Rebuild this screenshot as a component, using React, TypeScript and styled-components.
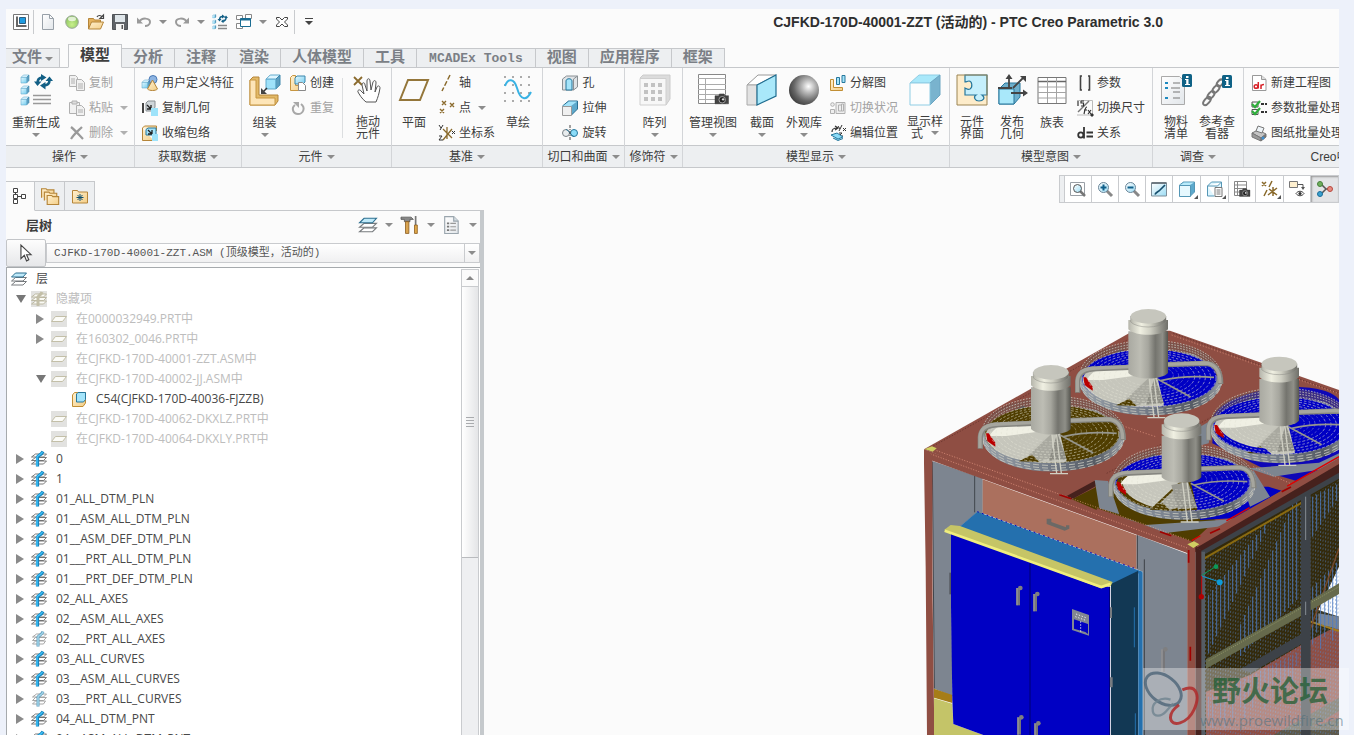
import React from 'react';
import styled, { createGlobalStyle, css } from 'styled-components';

const cjk = '"Noto Sans CJK SC", sans-serif';

const GlobalStyle = createGlobalStyle`
  * { box-sizing: border-box; }
  body {
    margin: 0;
    background: #edf1fa;
    color: #3c3c3c;
    font: 12px/14px "Liberation Sans", ${cjk};
    overflow: hidden;
  }
  button { font: inherit; color: inherit; background: none; border: 0; padding: 0; margin: 0; }
  svg { display: block; flex: none; }
  ul { list-style: none; margin: 0; padding: 0; }
`;

/* ---------- icons ---------- */

const Defs = styled.svg`
  position: absolute;
  width: 0;
  height: 0;
`;

const SharedDefs = () => (
  <Defs aria-hidden="true">
    <defs>
      <radialGradient id="ball" cx=".65" cy=".38" r=".7"><stop offset="0" stopColor="#fff" /><stop offset=".3" stopColor="#bbb" /><stop offset=".7" stopColor="#666" /><stop offset="1" stopColor="#3c3c3c" /></radialGradient>
      <radialGradient id="green" cx=".5" cy=".7" r=".7"><stop offset="0" stopColor="#c8f08c" /><stop offset="1" stopColor="#86bf5a" /></radialGradient>
      <linearGradient id="page" x1="0" y1="0" x2="1" y2="1"><stop offset="0" stopColor="#fff" /><stop offset="1" stopColor="#e2e6ea" /></linearGradient>
      <linearGradient id="tan" x1="0" y1="0" x2="1" y2="1"><stop offset="0" stopColor="#fff0cf" /><stop offset="1" stopColor="#f4cf88" /></linearGradient>
      <linearGradient id="ice" x1="0" y1="0" x2="1" y2="1"><stop offset="0" stopColor="#e4f8ff" /><stop offset="1" stopColor="#74cdef" /></linearGradient>
      <linearGradient id="motor"><stop offset="0" stopColor="#a9a9a1" /><stop offset=".3" stopColor="#bdbdb4" /><stop offset=".5" stopColor="#a6a69e" /><stop offset=".68" stopColor="#74746e" /><stop offset=".86" stopColor="#8f8f88" /><stop offset="1" stopColor="#55554f" /></linearGradient>
      <linearGradient id="collar"><stop offset="0" stopColor="#b5b5ab" /><stop offset=".3" stopColor="#f0f0e2" /><stop offset=".55" stopColor="#d0d0c4" /><stop offset=".8" stopColor="#96968e" /><stop offset="1" stopColor="#70706a" /></linearGradient>
      <linearGradient id="wall"><stop offset="0" stopColor="#98a0a8" /><stop offset=".45" stopColor="#747c88" /><stop offset=".8" stopColor="#555b64" /><stop offset="1" stopColor="#9aa0a6" /></linearGradient>
      <linearGradient id="lens" x1="0" y1="0" x2="1" y2="1"><stop offset="0" stopColor="#fff" /><stop offset="1" stopColor="#9cdcf4" /></linearGradient>
    </defs>
  </Defs>
);

const Cube = ({ x = 0, y = 0, s = 1, front = 'url(#ice)' }: { x?: number; y?: number; s?: number; front?: string }) => (
  <g transform={`translate(${x} ${y}) scale(${s})`} strokeLinejoin="round">
    <path d="M0 3l3-3h7L7 3z" fill="#dff6ff" stroke="#5fa9cc" strokeWidth=".7" />
    <path d="M7 3l3-3v7l-3 3z" fill="#5d9fc0" stroke="#3b86ac" strokeWidth=".7" />
    <path d="M0 3h7v7H0z" fill={front} stroke="#5fa9cc" strokeWidth=".7" />
  </g>
);

const Camera = ({ x, y, s = 1 }: { x: number; y: number; s?: number }) => (
  <g transform={`translate(${x} ${y}) scale(${s})`}>
    <path d="M0 3h4l1-2h5l1 2h4v9H0z" fill="#444" stroke="#333" strokeWidth=".5" />
    <circle cx="8" cy="7.500" r="3.600" fill="#222" stroke="#aaa" /><circle cx="9" cy="7" r="1.300" fill="#ddd" />
  </g>
);

const Info = ({ x, y, s = 1 }: { x: number; y: number; s?: number }) => (
  <g transform={`translate(${x} ${y}) scale(${s})`}>
    <rect width="10" height="13" rx="1.500" fill="#0f6286" />
    <path d="M4 2h2.500v2H4zM3 5h3.500v5H8v1H3v-1h1.200V6H3z" fill="#fff" />
  </g>
);

const DocPair = () => (
  <g fill="#f1f1f1" stroke="#b0b0b0">
    <path d="M.5.5h6l2 2v9h-8z" /><path d="M2 4h4M2 6h4M2 8h4" />
    <path d="M7.500 4.500h5l3 3v8h-8z" /><path d="M9 9h5M9 11h5M9 13h5" />
  </g>
);

const icons: Record<string, React.ReactNode> = {
  app: <g><path d="M.5.5h15v15H.500z" fill="#fff" stroke="#777" /><path d="M3 2.500h2v8.500h8.500v2H3z" fill="#666" /><path d="M6.500 3.500h6v6h-6z" fill="#1e9be0" stroke="#2d5f80" /></g>,
  fresh: <path d="M2.500.5h7l4 4v11h-11zM9.500.5v4h4" fill="url(#page)" stroke="#98a0a8" />,
  globe: <g><circle cx="8" cy="8" r="6.300" fill="url(#green)" stroke="#9aa79a" /><ellipse cx="8" cy="5" rx="4" ry="2.200" fill="#fff" opacity=".7" /></g>,
  open: <g><path d="M.5 15V4.500h5l1 1.500h6V9" fill="#e4b25e" stroke="#b58539" /><path d="M.5 15l3-7h12l-3 7z" fill="url(#tan)" stroke="#b58539" /><path d="M9 3c1-2 4-2 5 0M15.500 1v3.500H12z" fill="none" stroke="#444" strokeWidth="1.200" /></g>,
  save: <g><path d="M.5.5h15v15h-15z" fill="#606468" stroke="#505458" /><path d="M3 1h10v7H3z" fill="#dfe6ea" /><path d="M4 10h8v6H4z" fill="#f6f6f6" /><path d="M9.500 11h1.500v4H9.500z" fill="#555" /></g>,
  undo: <g fill="none" stroke="#9a9a9a" strokeWidth="2"><path d="M3 8c3-5 11-4 11 0 0 3-3 4-5 4" /><path d="M1 3.500v6h6z" fill="#9a9a9a" stroke="none" /></g>,
  redo: <g fill="none" stroke="#9a9a9a" strokeWidth="2"><path d="M13 8c-3-5-11-4-11 0 0 3 3 4 5 4" /><path d="M15 3.500v6H9z" fill="#9a9a9a" stroke="none" /></g>,
  regen: <g><Cube x={.5} y={.5} s={.35} /><Cube x={.5} y={6} s={.35} /><Cube x={.5} y={11.500} s={.35} /><path d="M6 11.500h9M6 14.500h9" stroke="#888" strokeWidth="1.300" /><path d="M7.500 6c0-2 1-3.500 3-3.500M14 3c.5 2-1 4-3 4.300" fill="none" stroke="#125f85" strokeWidth="1.500" /><path d="M10 .5l3 2-3 2zM11.500 5.300v4L9 7.300zM5.500 5h4l-2 2.500zM16 4h-4l2-2.500z" fill="#125f85" /></g>,
  windows: <g fill="#fff" stroke="#888"><path d="M.5 1.500h6v4h-6zM9.500.5h6v4h-6zM.5 9.500h6v5h-6z" /><path d="M4.500 4.500h10v8h-10z" stroke="#1a6c92" /><path d="M4.500 5.500h10" stroke="#1a6c92" strokeWidth="2" /></g>,
  closeX: <path d="M2.500 3.500h3L8 6l2.500-2.500h3V5L10.500 8l3 3v1.500h-3L8 10l-2.500 2.500h-3V11l3-3-3-3z" fill="#fff" stroke="#444" />,
  copy: <DocPair />,
  paste: <g fill="#f1f1f1" stroke="#b0b0b0"><path d="M.5 2.500h10v11H.500z" /><path d="M3 1h5v3H3z" fill="#ddd" /><path d="M7.500 5.500h5l3 3v7h-8z" /><path d="M9 10h5M9 12h5" /></g>,
  del: <path d="M2 2c4 3 8 8 12 12M13 2C9 6 5 9 2 14" fill="none" stroke="#9a9a9a" strokeWidth="2.200" />,
  udf: <g><Cube x={0} y={5} s={.8} /><circle cx="11" cy="4.500" r="4" fill="#8db4e2" stroke="#4a79b5" /><path d="M10.500 5l5 9c-2 2-8 2-10 0z" fill="url(#tan)" stroke="#b58539" /></g>,
  copyGeom: <g><path d="M1 3v10" stroke="#444" strokeWidth="2" /><path d="M4 3l2-2h7v6l-2 4H4z" fill="#cfd6da" stroke="#8a9094" /><path d="M5 5l4 4M9 5v4H5" fill="none" stroke="#222" strokeWidth="1.300" /><path d="M9 8h7v8H9z" fill="#9ee3fa" /></g>,
  shrink: <g><path d="M.5 3l2-2h12v5M.5 3v12.500h11" fill="url(#tan)" stroke="#b58539" /><path d="M4 4.500L6 3h8v7H4z" fill="#a4e4fa" stroke="#27779c" /><path d="M6 5l4 4M10 5v4H6" fill="none" stroke="#222" strokeWidth="1.300" /><path d="M10 9h6v7h-6z" fill="#9ee3fa" /></g>,
  create: <g><path d="M.5 2.500l2-2h3v10h7v3l-2 2H.5z" fill="url(#tan)" stroke="#c79641" /><path d="M5 3l2-2h8v6l-2 2H5z" fill="url(#ice)" stroke="#3b86ac" /><path d="M8.500 7.500h4l3 3v5h-7z" fill="#fff" stroke="#888" /></g>,
  repeat: <g fill="none" stroke="#a8a8a8" strokeWidth="2"><path d="M5 5c-4 3-2 9 3 9 5 0 8-6 3-10" /><path d="M3 2h6v6z" fill="#a8a8a8" stroke="none" /></g>,
  axis: <path d="M11 0L3 16" stroke="#8a6a2c" strokeWidth="1.500" strokeDasharray="5 2" />,
  point: <path d="M2 2l4 4M6 2L2 6M10 4l4 4M14 4l-4 4M0 10l4 4M4 10l-4 4" transform="translate(1 -1)" stroke="#8a6a2c" strokeWidth="1.400" />,
  csys: <g fill="none"><path d="M8 2v12M4 4l9 9M13 4l-9 11" stroke="#8a6a2c" strokeWidth="1.300" /><path d="M0 0l2 3M4 0L1 5M0 11h3l-3 4h4M13 6l3 3M16 6l-3 3" stroke="#333" /></g>,
  hole: <g><path d="M.5 4l4-3h11v11l-4 3H.5z" fill="#dfe3e6" stroke="#8a9094" /><path d="M4 15V6c0-3 6-3 6 0v9z" fill="#a4e4fa" stroke="#27779c" /><path d="M11.500 4v11M11.500 4l4-3" stroke="#8a9094" /></g>,
  extrude: <g><path d="M.5 6l6-5h9v8l-6 6z" fill="#5da9cc" stroke="#2b6f91" /><path d="M1 6l6-4.500h8L9 6z" fill="#a4e4fa" /><path d="M.5 6.500h9v9h-9z" fill="#f0f0f0" stroke="#999" /></g>,
  revolve: <g><ellipse cx="4" cy="8" rx="3.500" ry="3.500" fill="#e8ecee" stroke="#7a8186" /><ellipse cx="12" cy="8" rx="3.500" ry="3.500" fill="#8bdcf8" stroke="#27779c" /><path d="M4 4.500c2 0 6 7 8 7" fill="none" stroke="#27779c" /><path d="M8 0v16" stroke="#444" strokeDasharray="3 1 1 1" /></g>,
  explode: <g><path d="M.5 4.500h3v8h9v3h-12z" fill="url(#tan)" stroke="#c18e34" /><path d="M6.500 2.500h3v7h-3zM12 .5h3v7h-3z" fill="#a4e4fa" stroke="#27779c" /></g>,
  toggleState: <g fill="#eee" stroke="#b0b0b0"><circle cx="2.500" cy="4.500" r="1.800" /><path d="M.5 9.500h4v4h-4zM6 2.500h9v11H6z" /><path d="M8.500 5v6h3V5zM11.500 4h2v7h-2z" /></g>,
  editPos: <g fill="none"><path d="M2 7c0-4 3-4 5-4M5 1l3 2-3 2" stroke="#333" strokeWidth="1.200" /><path d="M8 1l2 3M12 0L9 6M13 3l3 3M16 3l-3 3M9 8h3l-3 3h4" stroke="#333" /><path d="M1 10l6-2 6 4-5 2zM3 13l5 2.500 5-2" fill="#8bdcf8" stroke="#27779c" /></g>,
  params: <path d="M5 1H3.500v14H5M11 1h1.500v14H11" fill="none" stroke="#444" strokeWidth="1.600" />,
  dims: <g fill="none" stroke="#333"><path d="M0 .5h15.500V15H0" stroke="#bbb" /><path d="M1 12L12 1" stroke="#777" strokeWidth="1.500" /><path d="M1 1v5M4 1h3M4 1v2h2.500v3H4M10 7c-2 0-2 3-3 7M7 10h3M11 10l3 4M14 10l-3 4" strokeWidth="1.200" /><path d="M14 14h2v2h-2z" fill="#333" /></g>,
  relation: <g fill="none" stroke="#333" strokeWidth="1.800"><circle cx="3.800" cy="10" r="2.600" /><path d="M7 2v11.500M9.500 7.500H16M9.500 11.500H16" /></g>,
  drawing: <g><path d="M1.500.5h9l4.500 4v11H1.500z" fill="#fff" stroke="#999" /><path d="M10.500.5v4H15" fill="#ddd" stroke="#999" /><g fill="none" stroke="#d8232a" strokeWidth="1.500"><circle cx="5" cy="11.500" r="1.800" /><path d="M7.300 7v6.500M10 9.500v4.500M10 11.500c0-1.500 1-2 3-2" /></g></g>,
  batch: <g fill="none"><path d="M1 2h6v5H1zM1 9.500h6v5H1z" stroke="#555" /><path d="M1 4l3 3 5-6M1 11l3 3 5-6" stroke="#2fae3b" strokeWidth="2.200" /><path d="M10 4h6M10 12h6" stroke="#333" strokeWidth="2" strokeDasharray="3 1" /></g>,
  print: <g stroke="#777"><path d="M1 8l6-3 8 4-5 4z" fill="#c4c4c4" /><path d="M1 8l9 5v3l-9-4z" fill="#999" /><path d="M10 13l5-4v3l-5 4z" fill="#777" /><path d="M5 6l2-5 6 2-2 5z" fill="#eef4f8" /><circle cx="12" cy="13" r="1.500" fill="#3f8fd0" stroke="none" /></g>,
  zoomFit: <g><path d="M.5 1.500h14v13H.500z" fill="#fff" stroke="#9aa0a6" /><path d="M9 9l6 6" stroke="#777" strokeWidth="2.500" /><circle cx="7.500" cy="7.500" r="4" fill="url(#lens)" stroke="#555" /></g>,
  zoomIn: <g><path d="M9 9l6 6" stroke="#888" strokeWidth="3" /><circle cx="6.500" cy="6.500" r="5" fill="url(#lens)" stroke="#6a8598" /><path d="M3.500 6.500h6M6.500 3.500v6" stroke="#0f5f8a" strokeWidth="2" /></g>,
  zoomOut: <g><path d="M9 9l6 6" stroke="#888" strokeWidth="3" /><circle cx="6.500" cy="6.500" r="5" fill="url(#lens)" stroke="#6a8598" /><path d="M3.500 6.500h6" stroke="#0f5f8a" strokeWidth="2" /></g>,
  repaint: <g><path d="M.5 2h15v13H.500z" fill="url(#lens)" stroke="#7d8e99" /><path d="M.5 2h15" stroke="#6f7a82" strokeWidth="2" /><path d="M4 13.500c1-2.500 3-2.500 5-4.500l5-5" fill="none" stroke="#174f6e" strokeWidth="1.700" /></g>,
  style: <g><path d="M.5 4l4-3h11v10l-4 4H.5z" fill="#5da9cc" stroke="#5597b6" /><path d="M1 4l4-2.500h10L11 4z" fill="#b9ebfb" /><path d="M.5 4.500h11v11H.500z" fill="#e6f8fe" stroke="#5597b6" /></g>,
  saved: <g><path d="M.5 5l4-4h10v5M.5 5v10h7M.5 5h10l4-4" fill="#dff6ff" stroke="#5597b6" /><path d="M8 6.500h7v9H8zM9.500 9h4M9.500 11h4M9.500 13h4" fill="#fff" stroke="#777" /></g>,
  viewMgr: <g><path d="M.5.5h12v14H.500zM.5 4h12M.5 7.500h12M.5 11h12M3.500 0v15" fill="#fff" stroke="#888" /><Camera x={5.500} y={7} s={.7} /></g>,
  datums: <g fill="none" stroke="#8a6a2c" strokeWidth="1.500"><path d="M0 1l4 4M4 1L0 5M10 0L7 6M5 9l-3 6M11 6v9M7 8l8 6M15 7l-9 7" /></g>,
  annot: <g><path d="M.5.5h8v6h-8z" fill="#fff0cf" stroke="#777" /><path d="M9 3.500h5v3" fill="none" stroke="#555" /><path d="M12 6l2 3 2-3z" fill="#555" /><path d="M7 12.500c2-3 6-3 8 0-2 3-6 3-8 0z" fill="#fff" stroke="#444" /><circle cx="11" cy="12.500" r="1.600" fill="#333" /></g>,
  spin: <g><path d="M4 3l5 5-5 5M9 8h4" fill="none" stroke="#555" strokeWidth="1.500" /><circle cx="3" cy="3" r="2.500" fill="#6fae5c" stroke="#45803a" /><circle cx="3" cy="13" r="2.500" fill="#3aa0d0" stroke="#1b6e98" /><circle cx="13" cy="8" r="2.500" fill="#e58a80" stroke="#b8473c" /></g>,
  treeTab: <g fill="#fff" stroke="#444"><path d="M3.500 5v2M3.500 10v2M5.500 8.500h4" /><path d="M1.500.5h4v4h-4zM1.500 6.500h4v4h-4zM1.500 11.500h4v4h-4zM9.500 6.500h4v4h-4z" /></g>,
  folders: <g fill="url(#tan)" stroke="#b58539"><path d="M.5 9.500v-8h4l1 1h6v3" /><path d="M3 12V4.500h4l1 1h6V8" /><path d="M5.500 15.500v-8h4l1 1h5.200v7z" /></g>,
  favorites: <g><path d="M.5 15V2.500h5l1 1.500h9v11z" fill="url(#tan)" stroke="#b58539" /><path d="M8 6v7M4.500 9.500h7M5.500 7l5 5M10.500 7l-5 5" stroke="#0f5070" /></g>,
  layers: <g fill="#fff" stroke="#777b7e"><path d="M.5 14l4-3.500h11L12 14z" /><path d="M.5 10l4-3.500h11L12 10z" /><path d="M.5 6l4-4h11L12 6z" fill="#bfeafa" stroke="#2d6f90" /></g>,
  tools: <g><path d="M0 1h9l2 2H8v2H3V3H0z" fill="#888" stroke="#555" strokeWidth=".7" /><path d="M4 5h3v10.500H4z" fill="#d9a450" stroke="#8a5a1c" strokeWidth=".7" /><path d="M13 0v8" stroke="#777" strokeWidth="1.500" /><path d="M12 8h2.500v7.500H12z" fill="#e0a94a" stroke="#8a5a1c" strokeWidth=".7" /></g>,
  settings: <g><path d="M1.500.5h8l4 4v11h-12z" fill="url(#page)" stroke="#9aa5ad" /><path d="M9.500.5v4h4" fill="#d5dde2" stroke="#9aa5ad" /><path d="M6.500 6.500h5M6.500 9.500h5M6.500 12.500h5" stroke="#999" /><path d="M3.500 6.500h2M3.500 9.500h2M3.500 12.500h2" stroke="#777" strokeWidth="1.500" /></g>,
  pointer: <path d="M3.500 1v12l3-3 2 5 2-1-2-4.500h4z" fill="#fff" stroke="#444" />,
  layer: <g><path d="M.5 13l4-3h11l-3 3zM.5 9.500l4-3h11l-3 3zM.5 6l4-3h11l-3 3z" fill="#fff" stroke="#6a6a6a" strokeWidth=".9" /><path d="M6.500 15.500V6c1-2 4-2 5.500-5.500" fill="none" stroke="#1585bd" strokeWidth="3.200" /><path d="M6 15V6c1-2 4-2 5.500-5" fill="none" stroke="#3fc0f8" strokeWidth="1.500" /></g>,
  layerDim: <g opacity=".65"><path d="M1.500 13l3-3h10l-2 3zM1.500 9.500l3-3h11l-3 3zM1.500 6l4-3h10l-3 3z" fill="#fff" stroke="#6a6a6a" strokeWidth=".9" /><path d="M7 15.500V6c1-2 4-2 5-5.500" fill="none" stroke="#146d9c" strokeWidth="3" /><path d="M7 15V6c1-2 4-2 5-5" fill="none" stroke="#6fc0df" strokeWidth="1.500" /></g>,
  hiddenLayer: <g><path d="M0 0h16v16H0z" fill="#e2e2e0" /><path d="M.5 13l4-3h11l-3 3zM.5 9.500l4-3h11l-3 3zM.5 6l4-3h11l-3 3z" fill="#fafaf5" stroke="#bdb9a3" /><path d="M7 15V6c1-2 3-2 4-5" fill="none" stroke="#c3bfa8" strokeWidth="3" /></g>,
  hiddenPlane: <g><path d="M0 0h16v16H0z" fill="#e2e2e0" /><path d="M.5 10.500l4-5h11l-4 5z" fill="#fcfcf8" stroke="#c3bfa8" /></g>,
  part: <g><path d="M1.500 4l2-2.500h11V12l-2.500 3.500H1.500z" fill="url(#tan)" stroke="#c18e34" /><path d="M5.500 3l1.500-1.500h7.500v7L12.500 11h-7z" fill="#a4e4fa" stroke="#27779c" /></g>,
  /* 32px ribbon artwork */
  bigRegen: <g><Cube x={1} y={1} s={.8} /><Cube x={1} y={12} s={.8} /><Cube x={1} y={23} s={.8} /><path d="M13 21.500h18M13 25.500h18M13 29.500h18" stroke="#999" strokeWidth="1.600" /><path d="M17.500 9c0-3 1-5 4.500-5.500M29.500 6c0 3-1 5-5 5.500" fill="none" stroke="#125f85" strokeWidth="2.600" /><path d="M21 0l5.500 3.500L21 7zM25.500 8v7.500L20 11.500zM14 7.500h7.500L17.500 12zM33 7h-7.500L29.500 2.500z" fill="#125f85" /></g>,
  bigAssemble: <g><path d="M1 6l3-3h6v18h19v6l-3 4H1z" fill="#e2b968" stroke="#b58539" /><path d="M1 6h6v18h19v7H1z" fill="#fde5b8" stroke="#c79641" /><Cube x={17} y={1} s={1.400} front="#9fe2fa" /><path d="M18 14l-4 4" stroke="#333" strokeWidth="1.500" /><path d="M12 14v6h6z" fill="#444" /></g>,
  bigDrag: <g><path d="M2 3l8 8M10 3l-8 8" stroke="#8a6a2c" strokeWidth="1.800" /><path d="M14 29c-4-3-7-8-8-10-1-2 2-3 3-1l3 3-2-9c0-3 3-3 3 0l2 6V8c0-3 3-3 3 0l1 9 2-8c1-2 3-2 3 1l-1 9 2-5c1-2 3-1 3 1-1 6-2 9-4 14z" transform="translate(0 -1)" fill="#fff" stroke="#555" /></g>,
  bigPlane: <path d="M2 26L10 6h20l-8 20z" fill="none" stroke="#94763a" strokeWidth="2" />,
  bigSketch: <g><g fill="#444">{[3, 11, 19, 27].flatMap(y => [3, 11, 19, 27].map(x => <circle key={`${x}-${y}`} cx={x} cy={y} r=".8" />))}</g><path d="M3 12c3-8 9-8 12 2 4 14 10 12 14 4" fill="none" stroke="#38b2e4" strokeWidth="2" /></g>,
  bigPattern: <g><path d="M1 4l3-3h27v24l-4 6z" fill="#dcdcdc" stroke="#ccc" /><path d="M1 4.500h26V31H1z" fill="#f7f7f7" stroke="#cfcfcf" /><g fill="#c2c2c2">{[9, 16, 23].flatMap(y => [5, 12, 19].map(x => <rect key={`${x}-${y}`} x={x} y={y} width="4" height="4" />))}</g></g>,
  bigView: <g><path d="M1.500.5h27v29h-27z" fill="#fff" stroke="#888" /><path d="M1 4.500h28M1 10.500h28M1 15.500h28M1 20.500h28M1 25.500h28M8.500 5v24" stroke="#ababab" /><Camera x={18} y={19} s={.9} /></g>,
  bigSection: <g><path d="M1 11L12 1h18L11 11z" fill="#fff" stroke="#999" /><path d="M1 11h10v20H1z" fill="#e2e2e2" stroke="#aaa" /><path d="M11 11L30 1v21L11 31z" fill="#a9e8fa" stroke="#1f6d90" strokeWidth="1.200" /></g>,
  bigBall: <circle cx="16" cy="16" r="15" fill="url(#ball)" />,
  bigStyle: <g><path d="M1 9l9-8h21L21 9z" fill="#a9e8fa" stroke="#8fcde4" /><path d="M21 9L31 1v20L21 31z" fill="#79b3ce" stroke="#6aa5c2" /><path d="M1 9h20v22H1z" fill="#fdfdfd" stroke="#8fcde4" /></g>,
  bigInterface: <g><path d="M1 1h30v30H1z" fill="#fdecca" /><path d="M9 1h22v20h-5c4 3 1 6-3 6s-6-4-3-6H9v-7c2 1 3 2 5 1 3-2 2-8-1-8-2 0-2 1-4 1z" fill="#c5effc" stroke="#27779c" strokeWidth="1.200" /><path d="M1 1h30v30H1z" fill="none" stroke="#9b8452" /></g>,
  bigPublish: <g><path d="M3 15l6-6h15v14l-6 7H3z" fill="#6dafcc" stroke="#27779c" /><path d="M3 15h15v15H3z" fill="#a9e8fa" stroke="#27779c" /><path d="M13 15V5M17 14L27 4M15 19h13M2 14h14" stroke="#444" strokeWidth="1.800" fill="none" /><path d="M13 0l3.500 5h-7zM30 2v6l-6-6zM32 19l-5 3.500v-7z" fill="#444" /></g>,
  bigTable: <g><path d="M2 3.500h28v26H2z" fill="#fff" stroke="#777" /><path d="M2 7.500h28" stroke="#666" strokeWidth="1.500" /><path d="M2 13h28M2 18.500h28M2 24h28M11.500 4v25M20.500 4v25" stroke="#a4a4a4" /></g>,
  bigBom: <g><path d="M1.500 2.500h18l5 5v23h-23z" fill="url(#page)" stroke="#aaa" /><path d="M13 9h7M11 14h9M13 18h7M13 24h7" stroke="#777" /><path d="M5 9h3M5 14h3M5 24h3" stroke="#1e8ac0" strokeWidth="2" /><Info x={22} y={0} /></g>,
  bigRef: <g fill="none" stroke="#777" strokeWidth="2"><ellipse cx="6" cy="27" rx="5" ry="2.500" transform="rotate(-50 6 27)" /><ellipse cx="10" cy="21" rx="4.500" ry="2.500" transform="rotate(-50 10 21)" /><ellipse cx="15" cy="15" rx="4.500" ry="2.500" transform="rotate(-50 15 15)" /><ellipse cx="19" cy="9" rx="4" ry="2.500" transform="rotate(-50 19 9)" /><g stroke="none"><Info x={21} y={1} /></g></g>,
};

const Icon = ({ name, size = 16, box = 16 }: { name: string; size?: number; box?: number }) => (
  <svg width={size} height={size} viewBox={`0 0 ${box} ${box}`} overflow="visible" aria-hidden="true">{icons[name]}</svg>
);

const Caret = styled.span`
  flex: none;
  width: 0;
  height: 0;
  border: 4px solid transparent;
  border-top-color: #8c8c8c;
  border-bottom: 0;
`;

/* ---------- frame ---------- */

const Page = styled.div`
  position: relative;
  height: 100vh;
  padding: 9px 15px 0 6px;
`;

const Window = styled.main`
  display: flex;
  flex-direction: column;
  height: 100%;
  overflow: hidden;
  background: #fbfbfb;
`;

const TitleBar = styled.header`
  display: flex;
  align-items: center;
  height: 35px;
  padding: 0 0 9px 3px;
`;

const QuickButton = styled.button<{ $w?: number }>`
  display: flex;
  align-items: center;
  justify-content: center;
  flex: none;
  width: ${p => p.$w ?? 24}px;
  height: 24px;
`;

const Rule = styled.span`
  flex: none;
  width: 1px;
  height: 24px;
  margin-right: 2px;
  background: #c9cbce;
`;

const Title = styled.h1`
  margin: 0 176px 0 auto;
  font: bold 14px/18px "Liberation Sans", ${cjk};
  color: #2e2e2e;
  white-space: nowrap;
`;

const Tabs = styled.nav`
  display: flex;
  align-items: flex-end;
  height: 24px;
  box-shadow: inset 0 -1px #c6c8cb;
`;

const Tab = styled.button<{ $active?: boolean; $mono?: boolean }>`
  display: flex;
  align-items: center;
  justify-content: center;
  flex: none;
  height: 20px;
  padding: 2px ${p => (p.$mono ? 12 : 11)}px 0;
  border: 1px solid #c6c8cb;
  border-left: 0;
  background: #edeff1;
  color: #7b7f86;
  font: bold ${p => (p.$mono ? 13 : 15)}px/16px "Liberation Mono", ${cjk};
  ${p => p.$active && css`
    height: 24px;
    border-left: 1px solid #c6c8cb;
    border-bottom-color: #fbfbfb;
    background: #fbfbfb;
    color: #3f3f3f;
  `}
`;

const FileTab = styled(Tab)`
  gap: 3px;
  width: 54px;
  margin-right: 8px;
  padding: 2px 0 0;
`;

const Ribbon = styled.section`
  display: flex;
  overflow: hidden;
  flex: none;
  border-bottom: 1px solid #c6c8cb;
`;

const Group = styled.div<{ $w: number }>`
  display: flex;
  flex-direction: column;
  flex: none;
  width: ${p => p.$w}px;
  border-right: 1px solid #d3d5d8;
`;

const GroupBody = styled.div<{ $center?: boolean }>`
  display: flex;
  justify-content: ${p => (p.$center ? 'center' : 'flex-start')};
  height: 77px;
  padding: 3px 0 0 2px;
`;

const GroupLabel = styled.button`
  display: flex;
  align-items: center;
  justify-content: center;
  gap: 4px;
  height: 22px;
  border-top: 1px solid #c6c8cb;
  background: #edeff1;
`;

const SmallColumn = styled.div`
  display: grid;
  grid-auto-rows: 24px;
  row-gap: 1px;
  margin: 0 2px;
`;

const SmallButton = styled.button`
  display: flex;
  align-items: center;
  gap: 4px;
  padding: 0 3px;
  white-space: nowrap;
  ${Caret} { margin-left: 3px; }
  &:disabled { color: #a3a3a3; }
  &:disabled ${Caret} { border-top-color: #b0b0b0; }
`;

const BigButton = styled.button<{ $w: number }>`
  display: flex;
  flex-direction: column;
  align-items: center;
  width: ${p => p.$w}px;
  padding-top: 3px;
  line-height: 12px;
`;

const BigText = styled.span<{ $two?: boolean }>`
  margin: ${p => (p.$two ? '10px 0 0' : '11px 0 4px')};
  white-space: pre;
  ${Caret} { display: inline-block; margin: 0 0 3px 8px; }
`;

const Divider = styled.span`
  width: 1px;
  height: 60px;
  margin: 7px 3px 0;
  background: #dcdee0;
`;

type Small = { icon: string; text: string; caret?: boolean; off?: boolean };
const Smalls = ({ items }: { items: Small[] }) => (
  <SmallColumn>
    {items.map(i => (
      <SmallButton key={i.text} disabled={i.off}><Icon name={i.icon} />{i.text}{i.caret && <Caret />}</SmallButton>
    ))}
  </SmallColumn>
);

const Big = ({ icon, text, w, caret, endCaret }: { icon: string; text: string; w: number; caret?: boolean; endCaret?: boolean }) => (
  <BigButton $w={w}>
    <Icon name={icon} size={32} box={32} />
    <BigText $two={text.includes('\n')}>{text}{endCaret && <Caret />}</BigText>
    {caret && <Caret />}
  </BigButton>
);

const RibbonGroup = ({ label, w, center, children }: { label: string; w: number; center?: boolean; children: React.ReactNode }) => (
  <Group $w={w}>
    <GroupBody $center={center}>{children}</GroupBody>
    <GroupLabel>{label}<Caret /></GroupLabel>
  </Group>
);

/* ---------- side panel ---------- */

const Work = styled.div`
  display: flex;
  flex: 1;
  min-height: 0;
`;

const Side = styled.aside`
  display: flex;
  flex-direction: column;
  flex: none;
  width: 478px;
  padding-top: 13px;
`;

const SideTabs = styled.div`
  display: flex;
  height: 30px;
  box-shadow: inset 0 -1px #c6c8cb;
`;

const SideTab = styled.button<{ $active?: boolean }>`
  display: flex;
  align-items: center;
  justify-content: center;
  width: ${p => (p.$active ? 29 : 30)}px;
  border: 1px solid #c6c8cb;
  border-left: 0;
  background: ${p => (p.$active ? '#fbfbfb' : '#edeff1')};
  ${p => p.$active && 'border-bottom-color: #fbfbfb;'}
`;

const SideBody = styled.div`
  display: flex;
  flex-direction: column;
  flex: 1;
  min-height: 0;
  border-right: 4px solid #c5c9cc;
`;

const SideHead = styled.div`
  display: flex;
  align-items: center;
  height: 28px;
  h2 { margin: 0 auto 0 20px; font: bold 13px/16px ${cjk}; }
`;

const ModelRow = styled.div`
  display: flex;
  align-items: center;
  height: 28px;
`;

const PickButton = styled.button`
  display: flex;
  align-items: center;
  justify-content: center;
  width: 40px;
  height: 28px;
  border: 1px solid #c3c5c8;
  border-radius: 2px;
  background: linear-gradient(#fdfdfd, #e6e7e9);
`;

const SelectBox = styled.label`
  display: flex;
  align-items: center;
  flex: 1;
  height: 20px;
  border: 1px solid #c9cbce;
  background: linear-gradient(#fff, #f0f0f1);
  select {
    flex: 1;
    height: 18px;
    padding: 0 0 0 7px;
    border: 0;
    border-right: 1px solid #c9cbce;
    appearance: none;
    background: none;
    color: #555;
    font: 11px/16px "Liberation Mono", ${cjk};
  }
  ${Caret} { margin: 0 3px; }
`;

const TreeBox = styled.div`
  display: flex;
  flex: 1;
  min-height: 0;
  overflow: hidden;
  border: 1px solid #a6aaad;
  border-width: 1px 0 0 1px;
  background: #fff;
`;

const Tree = styled.ul`
  flex: 1;
  padding-top: 1px;
`;

const TreeRow = styled.li<{ $depth: number; $muted?: boolean }>`
  display: flex;
  align-items: center;
  height: 20px;
  padding-left: ${p => p.$depth}px;
  color: ${p => (p.$muted ? '#bdbdbd' : '#484848')};
  font: 12px/18px "Open Sans", ${cjk};
  white-space: pre;
`;

const Expander = styled.button<{ $state: 'open' | 'closed' | 'none' }>`
  flex: none;
  width: 20px;
  height: 12px;
  padding-left: 5px;
  &::before {
    content: '';
    display: block;
    width: 0;
    ${p => p.$state === 'open' && 'border: 5px solid transparent; border-top: 8px solid #777; border-bottom: 0;'}
    ${p => p.$state === 'closed' && 'border: 5px solid transparent; border-left: 8px solid #8a8a8a; border-right: 0;'}
  }
`;

const TreeText = styled.span`
  margin-left: 9px;
`;

const ScrollBar = styled.div`
  display: flex;
  flex-direction: column;
  width: 18px;
  margin: 1px 1px 0 0;
  border: 1px solid #c9cbce;
  border-bottom: 0;
  background: #eeeff1;
`;

const ScrollUp = styled.button`
  display: flex;
  align-items: center;
  justify-content: center;
  height: 17px;
  border-bottom: 1px solid #c9cbce;
  background: #fbfbfb;
  &::before { content: ''; border: 4px solid transparent; border-bottom-color: #888; border-top: 0; }
`;

const Thumb = styled.div`
  display: flex;
  flex-direction: column;
  align-items: center;
  justify-content: center;
  gap: 2px;
  height: 271px;
  border-bottom: 1px solid #b9bbbe;
  background: linear-gradient(90deg, #fff, #e4e5e7);
  span { width: 8px; height: 1px; background: #a9abae; }
`;

type Row = { d: number; e: 'open' | 'closed' | 'none'; icon: string; text: string; muted?: boolean };
const layer = (text: string, icon = 'layer'): Row => ({ d: 4, e: 'closed', icon, text });
const rows: Row[] = [
  { d: 4, e: 'open', icon: 'hiddenLayer', text: '隐藏项', muted: true },
  { d: 24, e: 'closed', icon: 'hiddenPlane', text: '在0000032949.PRT中', muted: true },
  { d: 24, e: 'closed', icon: 'hiddenPlane', text: '在160302_0046.PRT中', muted: true },
  { d: 24, e: 'none', icon: 'hiddenPlane', text: '在CJFKD-170D-40001-ZZT.ASM中', muted: true },
  { d: 24, e: 'open', icon: 'hiddenPlane', text: '在CJFKD-170D-40002-JJ.ASM中', muted: true },
  { d: 44, e: 'none', icon: 'part', text: 'C54(CJFKD-170D-40036-FJZZB)' },
  { d: 24, e: 'none', icon: 'hiddenPlane', text: '在CJFKD-170D-40062-DKXLZ.PRT中', muted: true },
  { d: 24, e: 'none', icon: 'hiddenPlane', text: '在CJFKD-170D-40064-DKXLY.PRT中', muted: true },
  layer('0'), layer('1'), layer('01_ALL_DTM_PLN'), layer('01__ASM_ALL_DTM_PLN'), layer('01__ASM_DEF_DTM_PLN'),
  layer('01___PRT_ALL_DTM_PLN'), layer('01___PRT_DEF_DTM_PLN'), layer('02_ALL_AXES'), layer('02__ASM_ALL_AXES'),
  layer('02___PRT_ALL_AXES', 'layerDim'), layer('03_ALL_CURVES'), layer('03__ASM_ALL_CURVES'),
  layer('03___PRT_ALL_CURVES', 'layerDim'), layer('04_ALL_DTM_PNT'), layer('04__ASM_ALL_DTM_PNT'),
];

/* ---------- graphics area ---------- */

const Stage = styled.section`
  display: flex;
  flex-direction: column;
  align-items: flex-end;
  flex: 1;
  min-width: 0;
  padding-top: 7px;
  overflow: hidden;
`;

const ViewTools = styled.div`
  display: flex;
  flex: none;
  height: 28px;
  margin-bottom: 97px;
  border: 1px solid #c9cbce;
  background: #fff;
  &::before { content: ''; width: 4px; background: #edeff1; border-right: 1px solid #c9cbce; }
`;

const ViewButton = styled.button<{ $on?: boolean; $menu?: boolean }>`
  display: flex;
  align-items: center;
  justify-content: center;
  position: relative;
  width: 27px;
  border-right: 1px solid #c9cbce;
  &:last-child { border-right: 0; }
  ${p => p.$on && 'background: #e3e4e6; box-shadow: inset 1px 1px 2px #999;'}
  ${p => p.$menu && css`
    width: 28px;
    &::after { content: ''; position: absolute; right: 2px; bottom: 3px; border: 2px solid #555; border-top-color: transparent; border-left-color: transparent; }
  `}
`;

const rings = [200, 184, 168, 152, 136, 120, 104, 88, 72];

const Fan = ({ x, y, floor, left = '#c4c4ba', children }: { x: number; y: number; floor: string; left?: string; children?: React.ReactNode }) => (
  <g transform={`translate(${x} ${y})`}>
    {/* rear half of the cage */}
    <path d="M186 400C190 260 600 250 614 400L590 400C560 330 240 330 210 400z" fill="#6b5652" opacity=".5" />
    <path d="M225 362l85-45 25 12v38z" fill="#50565c" opacity=".8" />
    <path d="M470 322l60 8 40 26-90-6z" fill="#8a9096" opacity=".8" />
    <path d="M275 352l30-8 5 12-35 6z" fill="#b90000" />
    <g fill="none" stroke="#c2c2b8" strokeWidth="2.500" strokeDasharray="5 4">
      <path d="M186 400C190 255 600 250 614 400" /><path d="M196 395C205 268 590 262 606 395" /><path d="M206 390C220 280 580 274 597 390" /><path d="M218 385C235 293 565 287 588 385" /><path d="M232 378C255 305 550 300 576 378" />
    </g>
    {/* outer wall */}
    <path d="M186 395v22c20 130 400 130 428 0v-22z" fill="url(#wall)" />
    <g fill="none" stroke="#c8c8be" strokeWidth="2.500" strokeDasharray="18 9">
      <path d="M186 402C206 528 594 528 614 402" /><path d="M186 410C206 536 594 536 614 410" /><path d="M188 420C210 542 590 542 612 420" />
    </g>
    {/* impeller */}
    <ellipse cx="396" cy="402" rx="202" ry="86" fill={floor} />
    <path d="M420 400L440 485C300 500 210 460 196 410c0-12 10-30 24-38l130 0z" fill={left} />
    <path d="M396 392L240 380l-24 20c0 36 40 60 90 76z" fill="#c6c6bc" />
    <path d="M396 400l-70 66 30 20 40-14z" fill="#a9a9a0" />
    <path d="M296 484l40-20 22 22z" fill="#4f3d00" />
    <path d="M412 400l-26 82 54-4z" fill="#8c8c84" />
    {children}
    <path d="M208 408c10-16 24-30 52-38l80-4 8 30-90 12z" fill="#f0f0e4" />
    <path d="M198 400l8 0 20 28v12l-24-16z" fill="#b90000" />
    <g fill="none" stroke="#e2e2d4" strokeWidth="2">
      {rings.map((r, i) => <ellipse key={r} cx="396" cy={402 - i} rx={r} ry={r * .43} strokeDasharray={i % 2 ? '7 6' : '9 5'} strokeOpacity={i < 5 ? .85 : .5} />)}
    </g>
    <g fill="none" stroke="#96968e" strokeWidth="5"><path d="M420 405l100 54M430 410c50-12 110-14 160-10" /></g>
    {/* support bars */}
    <g fill="none" stroke="#85857f" strokeWidth="16"><path d="M181 446v-34c2-36 40-38 60-38l96-4M450 362l110-4c34 0 50 20 50 62" /></g>
    <g fill="none" stroke="#a6a69e" strokeWidth="10"><path d="M180 444v-34c2-34 40-38 60-38l96-4M450 361l110-4c30 0 48 20 48 60" /></g>
    <path d="M394 390l16 130M408 390l16 130M390 521h54" fill="none" stroke="#d0d0c4" strokeWidth="4" />
    {/* motor */}
    <path d="M333 262v125c20 22 100 22 119 0V262z" fill="url(#motor)" />
    <path d="M333 228v28c20 22 100 22 119 0v-28z" fill="url(#collar)" />
    <path d="M340 216v18c20 20 85 20 106 0v-18z" fill="url(#collar)" stroke="#8d8d86" strokeWidth="1.500" />
    <ellipse cx="393" cy="217" rx="53" ry="22" fill="#c6c6bd" />
  </g>
);

const Handle = ({ x, y, h = 52 }: { x: number; y: number; h?: number }) => (
  <g><path d={`M${x} ${y + 4}h11v${h}H${x}z`} fill="#77777a" /><path d={`M${x} ${y + 4}h4v${h}h-4z`} fill="#98989a" /><circle cx={x + 12} cy={y + 4} r="7" fill="#7f7f80" /></g>
);

const Model = () => {
  const wires: React.ReactNode[] = [];
  for (let x = 866; x < 1142; x += 12) {
    const t = (x - 866) / 180;
    if (x <= 1045) wires.push(<path key={`a${x}`} d={`M${x} ${885 - t * 225}V${1060 - t * 385}`} />);
    if (x >= 960) wires.push(<path key={`b${x}`} d={`M${x} ${1000 - (x - 950) * 2.300}V${1080 - (x - 950)}`} />);
    wires.push(<path key={`c${x}`} opacity=".7" d={`M${x} ${1190 - t * 90}v${40 + (x % 5) * 20}`} />);
  }
  for (let x = 1178; x < 1257; x += 12) {
    wires.push(<path key={`d${x}`} d={`M${x} ${590 - (x - 1178) * .5}v${120 - (x - 1178)}`} />);
    wires.push(<path key={`e${x}`} d={`M${x} ${860 - (x - 1178)}v${150 + (x % 7) * 12}`} />);
  }
  return (
    <svg width="419" height="435" viewBox="0 0 1257 1305" role="img" aria-label="CJFKD-170D-40001-ZZT">
      <defs>
        <pattern id="mesh" width="15" height="12" patternUnits="userSpaceOnUse" patternTransform="skewY(-28)"><path d="M0 3h3M8 9h3" stroke="#5784c4" strokeWidth="3" /></pattern>
      </defs>
      {/* top deck */}
      <path d="M12 448L640 92h110l507 178v240L820 760z" fill="#8f4e43" />
      <path d="M455 598l75-38v70z" fill="#4f3d00" /><path d="M440 588l88-48v18l-72 40z" fill="#46211d" />
      <path d="M528 550h60l300 110-70 65-300-105z" fill="#4f3d00" />
      <path d="M830 560l215 0 40 12-135 82-110 6z" fill="#0000c4" />
      <path d="M524 540l14 85 60 18-34-100zM1000 510l50 80-60 30-20-60z" fill="#7d8590" />
      <path d="M600 650l75 25 270-18-28 20-180 22-105-40z" fill="#7d8590" />
      <path d="M850 360l40-20-20 100 120 60 267 0v-230h-60z" fill="#8f4e43" />
      <path d="M880 350c40-90 330-120 377-50v180l-130 62-60-18-190-94z" fill="#0000c4" opacity=".9" />
      <path d="M840 380l40-22-14 72-40 10zM985 505l75 25 197-30v-40l-60 28z" fill="#7d8590" />
      <path d="M815 722L1257 470" stroke="#e00000" strokeWidth="4" strokeDasharray="30 90 80 130 200" />
      <g fill="none" stroke="#5a2a24" strokeWidth="2" strokeDasharray="4 5"><path d="M40 438L640 110M560 520l560-300M760 100l497 180" /></g>
      <path d="M755 105l502 176M600 375l110 36M1000 500l110 50" stroke="#f5a58c" strokeWidth="2" strokeDasharray="3 6" />
      <Fan x={292} y={-168} floor="#0000c4" />
      <Fan x={0} y={0} floor="#4f3d00" />
      <Fan x={685} y={-25} floor="#0000c4">
        <path d="M200 420c14 40 100 66 170 68l-20-18c-60-4-120-30-138-62z" fill="#0000c4" />
      </Fan>
      <Fan x={392} y={145} floor="#0000c4" left="#4f3d00">
        <path d="M412 400l-50 10 20 76 36-30z" fill="#9a9a92" />
      </Fan>
      {/* front cabinet wall */}
      <path d="M37 483l151 52v110l-16-8-79 66 4 485-55-22z" fill="#7d8590" />
      <path d="M164 527v110M37 485l6 680M190 540v100" stroke="#41464d" strokeWidth="3" />
      <path d="M188 538l462 168v102L188 640z" fill="#ab705e" />
      <path d="M650 704l153 58v543H668V815l-18-7z" fill="#7d8590" /><path d="M673 778v527M652 706v100" stroke="#3d4248" strokeWidth="3" />
      <path d="M12 448l808 288v30L37 482z" fill="#8f4e43" />
      <g stroke="#f5a58c" strokeWidth="2" strokeDasharray="3 5"><path d="M32 462l770 282M50 452L812 722" /></g>
      <path d="M12 448l25 17 1 435 5 405H21l-4-505-5-310z" fill="#8f4e43" />
      <path d="M14 447l22-8 14 6-12 10z" fill="#d0cf62" />
      <path d="M42 1166l55 19v24l-55-16z" fill="#a67d18" /><path d="M42 1195l55 16 3 61 90 33H42z" fill="#c4c468" />
      <path d="M380 656h14v10l44 16v-6h10v10l-14 6-54-20z" fill="#6b6966" />
      <path d="M88 818h6v65h-6z" fill="#55585e" />
      {/* blue cabinet */}
      <path d="M172 635l496 180-90 38-460-172z" fill="#2470ae" /><path d="M172 635l480 173" stroke="#0000c4" strokeWidth="3" strokeDasharray="5 10" />
      <path d="M93 700l477 162v443H190l-90-33-3-72-4-280z" fill="#0000c4" /><path d="M330 780v525M569 860v445" stroke="#00006e" strokeWidth="3" />
      <path d="M573 852l82-40v493h-82z" fill="#123854" /><path d="M655 812l13 5v488h-13z" fill="#2470ae" /><path d="M643 922v120M646 1240v65" stroke="#2470ae" strokeWidth="3" />
      <path d="M72 690l20-15 28 3 458 168-6 12-30 6z" fill="#c6c566" /><path d="M74 692l470 169 28-10" fill="none" stroke="#f0ee7e" strokeWidth="8" />
      <path d="M456 927l51 18v62l-51-17z" fill="#828892" /><path d="M462 958l42 14v30l-8-6-34-10z" fill="#0000c4" /><path d="M482 964v32M468 942l32 12M466 950l34 12" stroke="#e8e8ee" strokeWidth="3" strokeDasharray="4 5" />
      <path d="M570 922h6v32h-6zM570 1132h8v30h-8z" fill="#777b80" />
      <Handle x={289} y={860} /><Handle x={340} y={878} /><Handle x={292} y={1248} /><Handle x={343} y={1266} /><Handle x={724} y={1044} h={68} />
      {/* right side */}
      <path d="M845 750l412-235v790H845z" fill="#33290a" />
      <path d="M990 1125l153-90 114-60v330H858v-130z" fill="#8f4e43" />
      <path d="M1172 890l85-100v140l-60 50-25 10z" fill="#33290a" /><path d="M1257 800l-62 130 62 20z" fill="#fff" /><path d="M1195 940l62 10v38l-62-16z" fill="#7d8590" /><path d="M1172 965l85 28" stroke="#a67d18" strokeWidth="6" />
      <path d="M1060 1305l197-112v40l-120 72zM1100 1305l157-50v50z" fill="#5d5848" />
      <path d="M855 770l402-230v765H855z" fill="url(#mesh)" />
      <g stroke="#4d7cc0" strokeWidth="2.500">{wires}</g>
      <path d="M1172 985l85-240" stroke="#7a4a2a" strokeWidth="4" />
      <path d="M858 1078l285-160 114-68v32l-114 66-285 158z" fill="#666a4c" /><path d="M866 1082l391-222" stroke="#a8ac74" strokeWidth="2" strokeDasharray="3 4" />
      <path d="M960 1108l183-105v30l-150 85z" fill="#3d4248" />
      <path d="M852 776l300-172" stroke="#8a6a10" strokeWidth="6" />
      <path d="M842 748l415-236v24L845 768z" fill="#3d4248" /><path d="M825 740l432-252v30L845 752z" fill="#46211d" /><path d="M818 724l439-250v18L832 742z" fill="#8f4e43" />
      <path d="M1143 590l29-14v729h-29z" fill="#3d4248" /><path d="M1157 590v130M1157 905v40" stroke="#858c94" strokeWidth="3" />
      <path d="M842 755h13v550h-13z" fill="#555c64" /><path d="M802 735h24v570h-24z" fill="#8f4e43" /><path d="M826 742l18 8v555h-18z" fill="#46211d" />
      <path d="M802 733l20-9 16 9-18 11z" fill="#d0cf62" />
      <path d="M806 750v38M811 1040v42M418 584l36 12M720 695l34 12M870 700l30-14M1085 575l28-14" fill="none" stroke="#a00000" strokeWidth="5" />
      <path d="M845 826l42-26" stroke="#0c9a57" strokeWidth="3" /><circle cx="888" cy="800" r="7" fill="#0c9a57" />
      <path d="M845 828l54 18" stroke="#0d9bd8" strokeWidth="3" /><circle cx="899" cy="847" r="9" fill="#0d9bd8" />
      <path d="M845 828v62" stroke="#c00000" strokeWidth="3" /><circle cx="844" cy="890" r="8" fill="#b00000" />
    </svg>
  );
};

const Watermark = styled.div`
  position: absolute;
  right: 5px;
  bottom: 5px;
  display: flex;
  align-items: center;
  width: 206px;
  height: 62px;
  background: rgba(255, 255, 255, 0.35);
  strong { display: block; padding-left: 12px; font: bold 29px/42px ${cjk}; color: rgba(28, 92, 48, 0.72); }
  small { display: block; font: 15px/20px "Open Sans", sans-serif; color: rgba(74, 108, 122, 0.55); }
`;

export default function App() {
  return (
    <Page>
      <GlobalStyle />
      <SharedDefs />
      <Window>
        <TitleBar>
          <QuickButton aria-label="应用程序"><Icon name="app" /></QuickButton>
          <Rule />
          {['fresh', 'globe', 'open', 'save', 'undo'].map(n => <QuickButton key={n} aria-label={n}><Icon name={n} /></QuickButton>)}
          <QuickButton $w={14} aria-label="undo list"><Caret /></QuickButton>
          <QuickButton aria-label="redo"><Icon name="redo" /></QuickButton>
          <QuickButton $w={14} aria-label="redo list"><Caret /></QuickButton>
          <QuickButton aria-label="regenerate"><Icon name="regen" /></QuickButton>
          <QuickButton aria-label="windows"><Icon name="windows" /></QuickButton>
          <QuickButton $w={14} aria-label="window list"><Caret /></QuickButton>
          <QuickButton aria-label="close"><Icon name="closeX" /></QuickButton>
          <Rule />
          <QuickButton aria-label="customize"><svg width="10" height="8" aria-hidden="true"><path d="M1 .5h8" stroke="#444" /><path d="M1 3h8L5 7z" fill="#444" /></svg></QuickButton>
          <Title>CJFKD-170D-40001-ZZT (活动的) - PTC Creo Parametric 3.0</Title>
        </TitleBar>
        <Tabs>
          <FileTab>文件<Caret /></FileTab>
          <Tab $active>模型</Tab>
          <Tab>分析</Tab><Tab>注释</Tab><Tab>渲染</Tab><Tab>人体模型</Tab><Tab>工具</Tab>
          <Tab $mono>MCADEx Tools</Tab>
          <Tab>视图</Tab><Tab>应用程序</Tab><Tab>框架</Tab>
        </Tabs>
        <Ribbon>
          <RibbonGroup label="操作" w={129}>
            <Big icon="bigRegen" text="重新生成" w={56} caret />
            <Smalls items={[{ icon: 'copy', text: '复制', off: true }, { icon: 'paste', text: '粘贴', caret: true, off: true }, { icon: 'del', text: '删除', caret: true, off: true }]} />
          </RibbonGroup>
          <RibbonGroup label="获取数据" w={107}>
            <Smalls items={[{ icon: 'udf', text: '用户定义特征' }, { icon: 'copyGeom', text: '复制几何' }, { icon: 'shrink', text: '收缩包络' }]} />
          </RibbonGroup>
          <RibbonGroup label="元件" w={150}>
            <Big icon="bigAssemble" text="组装" w={41} caret />
            <Smalls items={[{ icon: 'create', text: '创建' }, { icon: 'repeat', text: '重复', off: true }]} />
            <Divider />
            <Big icon="bigDrag" text={'拖动\n元件'} w={44} />
          </RibbonGroup>
          <RibbonGroup label="基准" w={151}>
            <Big icon="bigPlane" text="平面" w={40} />
            <Smalls items={[{ icon: 'axis', text: '轴' }, { icon: 'point', text: '点', caret: true }, { icon: 'csys', text: '坐标系' }]} />
            <Big icon="bigSketch" text="草绘" w={36} />
          </RibbonGroup>
          <RibbonGroup label="切口和曲面" w={82} center>
            <Smalls items={[{ icon: 'hole', text: '孔' }, { icon: 'extrude', text: '拉伸' }, { icon: 'revolve', text: '旋转' }]} />
          </RibbonGroup>
          <RibbonGroup label="修饰符" w={58} center>
            <Big icon="bigPattern" text="阵列" w={54} caret />
          </RibbonGroup>
          <RibbonGroup label="模型显示" w={267}>
            <Big icon="bigView" text="管理视图" w={56} caret />
            <Big icon="bigSection" text="截面" w={42} caret />
            <Big icon="bigBall" text="外观库" w={42} caret />
            <Smalls items={[{ icon: 'explode', text: '分解图' }, { icon: 'toggleState', text: '切换状况', off: true }, { icon: 'editPos', text: '编辑位置' }]} />
            <Big icon="bigStyle" text={'显示样\n式'} w={44} endCaret />
          </RibbonGroup>
          <RibbonGroup label="模型意图" w={203}>
            <Big icon="bigInterface" text={'元件\n界面'} w={40} />
            <Big icon="bigPublish" text={'发布\n几何'} w={40} />
            <Big icon="bigTable" text="族表" w={40} />
            <Smalls items={[{ icon: 'params', text: '参数' }, { icon: 'dims', text: '切换尺寸' }, { icon: 'relation', text: '关系' }]} />
          </RibbonGroup>
          <RibbonGroup label="调查" w={91}>
            <Big icon="bigBom" text={'物料\n清单'} w={42} />
            <Big icon="bigRef" text={'参考查\n看器'} w={40} />
          </RibbonGroup>
          <RibbonGroup label="Creo中国" w={196}>
            <Smalls items={[{ icon: 'drawing', text: '新建工程图' }, { icon: 'batch', text: '参数批量处理' }, { icon: 'print', text: '图纸批量处理' }]} />
          </RibbonGroup>
        </Ribbon>
        <Work>
          <Side>
            <SideTabs>
              <SideTab $active aria-label="模型树"><Icon name="treeTab" /></SideTab>
              <SideTab aria-label="文件夹浏览器"><Icon name="folders" size={18} /></SideTab>
              <SideTab aria-label="收藏夹"><Icon name="favorites" /></SideTab>
            </SideTabs>
            <SideBody>
              <SideHead>
                <h2>层树</h2>
                {['layers', 'tools', 'settings'].map(n => (
                  <React.Fragment key={n}>
                    <QuickButton $w={28} aria-label={n}><Icon name={n} size={18} /></QuickButton>
                    <QuickButton $w={14} aria-label={`${n} menu`}><Caret /></QuickButton>
                  </React.Fragment>
                ))}
              </SideHead>
              <ModelRow>
                <PickButton aria-label="选取"><Icon name="pointer" size={18} /></PickButton>
                <SelectBox>
                  <select aria-label="模型"><option>CJFKD-170D-40001-ZZT.ASM (顶级模型，活动的)</option></select>
                  <Caret />
                </SelectBox>
              </ModelRow>
              <TreeBox>
                <Tree>
                  <TreeRow $depth={4}><Icon name="layers" /><TreeText>层</TreeText></TreeRow>
                  {rows.map(r => (
                    <TreeRow key={r.text} $depth={r.d} $muted={r.muted}>
                      <Expander $state={r.e} aria-label={r.text} />
                      <Icon name={r.icon} />
                      <TreeText>{r.text}</TreeText>
                    </TreeRow>
                  ))}
                </Tree>
                <ScrollBar><ScrollUp aria-label="向上滚动" /><Thumb><span /><span /><span /><span /></Thumb></ScrollBar>
              </TreeBox>
            </SideBody>
          </Side>
          <Stage>
            <ViewTools>
              {['zoomFit', 'zoomIn', 'zoomOut', 'repaint', 'style', 'saved', 'viewMgr', 'datums', 'annot', 'spin'].map(n => (
                <ViewButton key={n} aria-label={n} $on={n === 'spin'} $menu={['style', 'saved', 'datums'].includes(n)}><Icon name={n} /></ViewButton>
              ))}
            </ViewTools>
            <Model />
          </Stage>
        </Work>
      </Window>
      <Watermark>
        <svg width="57" height="56" viewBox="0 0 174 168" fill="none" aria-hidden="true">
          <ellipse cx="62" cy="54" rx="62" ry="40" transform="rotate(38 62 54)" stroke="#4c6478" strokeWidth="9" opacity=".8" />
          <path d="M84 86c-30-10-60 10-54 36 4 18 26 16 40 0l22-24" stroke="#6f8390" strokeWidth="7" opacity=".8" />
          <path d="M120 56c46-20 54 20 36 60-20 44-70 56-72 26-1-14 12-30 26-40" stroke="#b02a2a" strokeWidth="9" opacity=".85" />
        </svg>
        <div><strong>野火论坛</strong><small>www.proewildfire.cn</small></div>
      </Watermark>
    </Page>
  );
}
